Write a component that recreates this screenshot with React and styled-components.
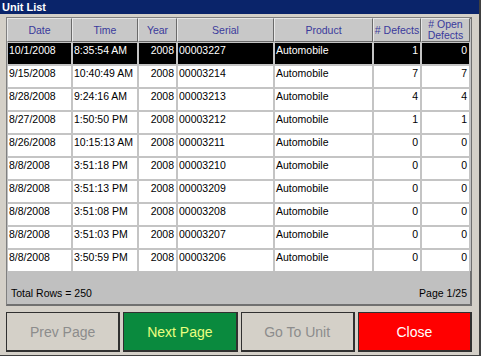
import React from "react";
import styled, { createGlobalStyle } from "styled-components";

const Global = createGlobalStyle`
  html, body { margin: 0; padding: 0; background: #d4d0c8; }
  body { font-family: "Liberation Sans", Arial, sans-serif; }
`;

const Window = styled.div`
  width: 481px;
  height: 356px;
  box-sizing: border-box;
  background: #d4d0c8;
  border-right: 2px solid #404040;
  border-bottom: 1px solid #404040;
  display: flex;
  flex-direction: column;
  overflow: hidden;
`;

const TitleBar = styled.div`
  height: 14px;
  background: #0a246a;
  color: #fff;
  font-weight: bold;
  font-size: 11px;
  line-height: 14px;
  padding-left: 2px;
`;

const Body = styled.div`
  padding: 3px 7px 0 6px;
  display: flex;
  flex-direction: column;
  gap: 5px;
`;

const Frame = styled.div`
  background: #c0c0c0;
  border: 1px solid #808080;
  border-right: 2px solid #707070;
  border-bottom: 2px solid #707070;
  padding: 1px 0 0 1px;
  height: 289px;
  box-sizing: border-box;
  display: flex;
  flex-direction: column;
`;

const Grid = styled.div`
  display: grid;
  grid-template-columns: 63px 64px 37px 95px 97px 46px 47px;
  grid-auto-rows: 21px;
  grid-template-rows: 22px;
  gap: 2px;
  background: #c4c4c4;
  width: 463px;
`;

const Head = styled.div`
  background: #c8c8c8;
  border-top: 1px solid #e8e8e8;
  border-left: 1px solid #e8e8e8;
  border-right: 1px solid #6a6a6a;
  border-bottom: 1px solid #6a6a6a;
  margin: -1px;
  color: #3a3a9c;
  font-size: 10.5px;
  line-height: 11px;
  display: flex;
  align-items: center;
  justify-content: center;
  text-align: center;
`;

const Cell = styled.div`
  background: ${p => (p.$sel ? "#000" : "#fff")};
  color: ${p => (p.$sel ? "#fff" : "#000")};
  font-size: 10.5px;
  line-height: 12px;
  padding: 1px 2px 0 1px;
  text-align: ${p => (p.$right ? "right" : "left")};
  white-space: nowrap;
  overflow: hidden;
`;

const Footer = styled.div`
  margin-top: auto;
  display: flex;
  justify-content: space-between;
  font-size: 10.5px;
  color: #000;
  padding: 0 3px 5px 3px;
`;

const Buttons = styled.div`
  display: grid;
  grid-template-columns: repeat(4, 1fr);
  gap: 3px;
  height: 40px;
  margin-top: 1px;
`;

const Btn = styled.div`
  box-sizing: border-box;
  border: 1px solid #303030;
  border-right-width: 2px;
  border-bottom-width: 2px;
  background: ${p => p.$bg};
  color: ${p => p.$fg};
  font-size: 14px;
  display: flex;
  align-items: center;
  justify-content: center;
`;

const rows = [
  ["10/1/2008", "8:35:54 AM", "2008", "00003227", "Automobile", "1", "0"],
  ["9/15/2008", "10:40:49 AM", "2008", "00003214", "Automobile", "7", "7"],
  ["8/28/2008", "9:24:16 AM", "2008", "00003213", "Automobile", "4", "4"],
  ["8/27/2008", "1:50:50 PM", "2008", "00003212", "Automobile", "1", "1"],
  ["8/26/2008", "10:15:13 AM", "2008", "00003211", "Automobile", "0", "0"],
  ["8/8/2008", "3:51:18 PM", "2008", "00003210", "Automobile", "0", "0"],
  ["8/8/2008", "3:51:13 PM", "2008", "00003209", "Automobile", "0", "0"],
  ["8/8/2008", "3:51:08 PM", "2008", "00003208", "Automobile", "0", "0"],
  ["8/8/2008", "3:51:03 PM", "2008", "00003207", "Automobile", "0", "0"],
  ["8/8/2008", "3:50:59 PM", "2008", "00003206", "Automobile", "0", "0"],
];

const headers = ["Date", "Time", "Year", "Serial", "Product", "# Defects", "# Open Defects"];
const rightCols = [2, 5, 6];

export default function App() {
  return (
    <>
      <Global />
      <Window>
        <TitleBar>Unit List</TitleBar>
        <Body>
          <Frame>
            <Grid>
              {headers.map(h => (
                <Head key={h}>{h}</Head>
              ))}
              {rows.map((r, i) =>
                r.map((v, j) => (
                  <Cell key={i + "-" + j} $sel={i === 0} $right={rightCols.includes(j)}>
                    {v}
                  </Cell>
                ))
              )}
            </Grid>
            <Footer>
              <span>Total Rows = 250</span>
              <span>Page 1/25</span>
            </Footer>
          </Frame>
          <Buttons>
            <Btn $bg="#d4d0c8" $fg="#8c8c8c">Prev Page</Btn>
            <Btn $bg="#0a8a3e" $fg="#eaff80">Next Page</Btn>
            <Btn $bg="#d4d0c8" $fg="#8c8c8c">Go To Unit</Btn>
            <Btn $bg="#ff0000" $fg="#ffffff">Close</Btn>
          </Buttons>
        </Body>
      </Window>
    </>
  );
}
